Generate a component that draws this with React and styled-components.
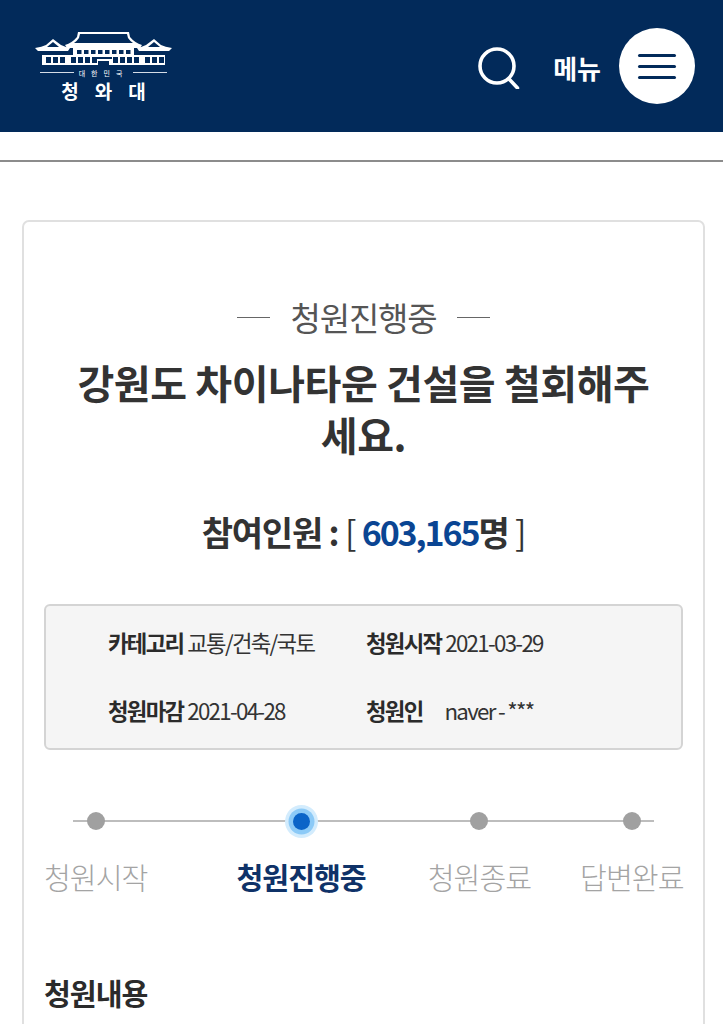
import React from "react"
import styled, { createGlobalStyle } from "styled-components"

const GlobalStyle = createGlobalStyle`
  html, body { margin: 0; padding: 0; background: #fff; }
  body { font-family: "Noto Sans CJK KR", "Noto Sans", sans-serif; overflow: hidden; height: 1024px; }
  * { box-sizing: border-box; }
`

const Page = styled.div`
  width: 723px;
  height: 1024px;
  overflow: hidden;
`

const Header = styled.header`
  height: 132px;
  background: #022a5a;
  display: flex;
  align-items: center;
  padding: 0 28px 0 35px;
`

const Logo = styled.div`
  width: 137px;
  margin-top: 1px;
  color: #fff;
  display: flex;
  flex-direction: column;
  align-items: center;
`

const LogoRule = styled.div`
  width: 127px;
  display: flex;
  align-items: center;
  gap: 5px;
  margin-top: 3px;
  font-size: 7px;
  line-height: 10px;
  letter-spacing: 6px;
  white-space: nowrap;
  &::before, &::after {
    content: "";
    flex: 1;
    height: 1px;
    background: #d5dce6;
  }
`

const LogoName = styled.div`
  font-size: 19px;
  line-height: 24px;
  font-weight: 700;
  letter-spacing: 16px;
  margin-right: -16px;
  margin-top: 1px;
`

const HeaderRight = styled.div`
  margin-left: auto;
  display: flex;
  align-items: center;
`

const MenuLabel = styled.span`
  color: #fff;
  font-size: 26px;
  font-weight: 700;
  margin: 3px 18px 0 29px;
`

const MenuButton = styled.button`
  width: 76px;
  height: 76px;
  border-radius: 50%;
  border: 0;
  padding: 0;
  background: #fff;
  display: flex;
  flex-direction: column;
  align-items: center;
  justify-content: center;
  gap: 8px;
`

const MenuBar = styled.span`
  width: 38px;
  height: 3px;
  border-radius: 2px;
  background: #022a5a;
`

const SubBar = styled.div`
  height: 30px;
  border-bottom: 2px solid #8c8c8c;
`

const Main = styled.main`
  padding: 58px 18px 0 22px;
`

const Card = styled.section`
  border: 2px solid #e0e0e0;
  border-radius: 7px;
  padding: 72px 20px 0;
  height: 900px;
`

const Status = styled.div`
  display: flex;
  justify-content: center;
  align-items: center;
  gap: 21px;
  font-size: 33px;
  line-height: 46px;
  font-weight: 400;
  color: #555;
  letter-spacing: -1.2px;
  &::before, &::after {
    content: "";
    width: 33px;
    height: 1px;
    background: #666;
  }
`

const Title = styled.h1`
  margin: 16px 0 0;
  padding: 0 20px;
  text-align: center;
  font-size: 40px;
  line-height: 52px;
  font-weight: 700;
  color: #333;
  letter-spacing: -0.4px;
`

const Count = styled.div`
  margin-top: 49px;
  text-align: center;
  font-size: 34px;
  line-height: 46px;
  font-weight: 700;
  color: #333;
  letter-spacing: -1.2px;
`

const CountNumber = styled.span`
  color: #0a4593;
  letter-spacing: -2.1px;
`

const Bracket = styled.span`
  font-weight: 400;
`

const InfoBox = styled.div`
  margin-top: 49px;
  height: 146px;
  border: 2px solid #d4d4d4;
  border-radius: 6px;
  background: #f5f5f5;
  padding: 6px 0 0 62px;
  display: grid;
  grid-template-columns: 258px 1fr;
  grid-auto-rows: 68px;
  align-items: center;
`

const InfoItem = styled.div`
  font-size: 22.3px;
  letter-spacing: -1.7px;
  color: #333;
  white-space: nowrap;
  margin-top: -8px;
`

const InfoLabel = styled.b`
  font-weight: 700;
  color: #2b2b2b;
  margin-right: ${p => p.$gap || 4}px;
`

const Steps = styled.div`
  position: relative;
  margin-top: 55px;
  display: flex;
`

const StepLine = styled.div`
  position: absolute;
  left: 29px;
  width: 581px;
  top: 15px;
  height: 2px;
  background: #bdbdbd;
`

const Step = styled.div`
  position: relative;
  margin-left: ${p => p.$offset}px;
  display: flex;
  flex-direction: column;
  align-items: center;
`

const DotWrap = styled.div`
  width: 32px;
  height: 32px;
  display: flex;
  align-items: center;
  justify-content: center;
`

const Dot = styled.span`
  width: ${p => (p.$active ? 17 : 18)}px;
  height: ${p => (p.$active ? 17 : 18)}px;
  border-radius: 50%;
  background: ${p => (p.$active ? "#0a64c8" : "#a0a0a0")};
  ${p => p.$active && "box-shadow: 0 0 0 4.5px #8ccaf7, 0 0 0 8px #d3ecfd;"}
`

const StepName = styled.div`
  margin-top: 16px;
  font-size: 29.2px;
  line-height: 46px;
  letter-spacing: -1px;
  white-space: nowrap;
  font-weight: ${p => (p.$active ? 700 : 300)};
  color: ${p => (p.$active ? "#0f3268" : "#a4a4a4")};
`

const SectionTitle = styled.h2`
  margin: 70px 0 0;
  font-size: 29.2px;
  line-height: 46px;
  font-weight: 700;
  color: #2b2b2b;
  letter-spacing: -1px;
`

function BlueHouse() {
  const upper = [42, 49, 56, 63, 70, 77, 84, 91]
  const lower = [11, 18, 25, 36, 43, 50, 57, 78, 85, 92, 99, 110, 117, 124]
  return (
    <svg width="137" height="34" viewBox="0 0 137 34" fill="none" stroke="#fff">
      <path d="M43 1 H94 L95 6 Q100 12 107 14 L105 17 H32 L30 14 Q37 12 42 6 Z" fill="#fff" stroke="none" />
      <path d="M45 3 H92 L93 7 Q95 10 98 12 H39 Q42 10 44 7 Z" fill="#022a5a" stroke="none" />
      <path d="M0 17 Q7 16 11 14 L18 8 L26 14 Q30 16 35 17 L33 20 H3 Z" fill="#fff" stroke="none" />
      <path d="M18 11 L24 16 H12 Z" fill="#022a5a" stroke="none" />
      <path d="M137 17 Q130 16 126 14 L119 8 L111 14 Q107 16 102 17 L104 20 H134 Z" fill="#fff" stroke="none" />
      <path d="M119 11 L125 16 H113 Z" fill="#022a5a" stroke="none" />
      <path d="M38 17 H99 V25 H38 Z" fill="#fff" stroke="none" />
      {upper.map(x => <rect key={x} x={x} y="19" width="4.5" height="4" fill="#022a5a" stroke="none" />)}
      <path d="M7 24 H130 V34 H7 Z" fill="#fff" stroke="none" />
      {lower.map(x => <rect key={x} x={x} y="26" width="5" height="6" fill="#022a5a" stroke="none" />)}
      <path d="M60 26 H77 V28 H60 Z M63 30 H74 V34 H63 Z" fill="#022a5a" stroke="none" />
    </svg>
  )
}

function SearchIcon() {
  return (
    <svg width="46" height="46" viewBox="0 0 46 46" fill="none" stroke="#fff" strokeWidth="3.6" strokeLinecap="round">
      <circle cx="19" cy="23" r="17" />
      <path d="M31 36 L39.5 45" />
    </svg>
  )
}

const steps = [
  { name: "청원시작", offset: 0 },
  { name: "청원진행중", offset: 89, active: true },
  { name: "청원종료", offset: 62 },
  { name: "답변완료", offset: 49 },
]

export default function App() {
  return (
    <Page>
      <GlobalStyle />
      <Header>
        <Logo>
          <BlueHouse />
          <LogoRule>대한민국</LogoRule>
          <LogoName>청와대</LogoName>
        </Logo>
        <HeaderRight>
          <SearchIcon />
          <MenuLabel>메뉴</MenuLabel>
          <MenuButton aria-label="메뉴">
            <MenuBar />
            <MenuBar />
            <MenuBar />
          </MenuButton>
        </HeaderRight>
      </Header>
      <SubBar />
      <Main>
        <Card>
          <Status>청원진행중</Status>
          <Title>강원도 차이나타운 건설을 철회해주세요.</Title>
          <Count>
            참여인원 : <Bracket>[</Bracket> <CountNumber>603,165</CountNumber>명 <Bracket>]</Bracket>
          </Count>
          <InfoBox>
            <InfoItem><InfoLabel>카테고리</InfoLabel>교통/건축/국토</InfoItem>
            <InfoItem><InfoLabel>청원시작</InfoLabel>2021-03-29</InfoItem>
            <InfoItem><InfoLabel>청원마감</InfoLabel>2021-04-28</InfoItem>
            <InfoItem><InfoLabel $gap={22}>청원인</InfoLabel>naver - ***</InfoItem>
          </InfoBox>
          <Steps>
            <StepLine />
            {steps.map(s => (
              <Step key={s.name} $offset={s.offset}>
                <DotWrap><Dot $active={s.active} /></DotWrap>
                <StepName $active={s.active}>{s.name}</StepName>
              </Step>
            ))}
          </Steps>
          <SectionTitle>청원내용</SectionTitle>
        </Card>
      </Main>
    </Page>
  )
}
